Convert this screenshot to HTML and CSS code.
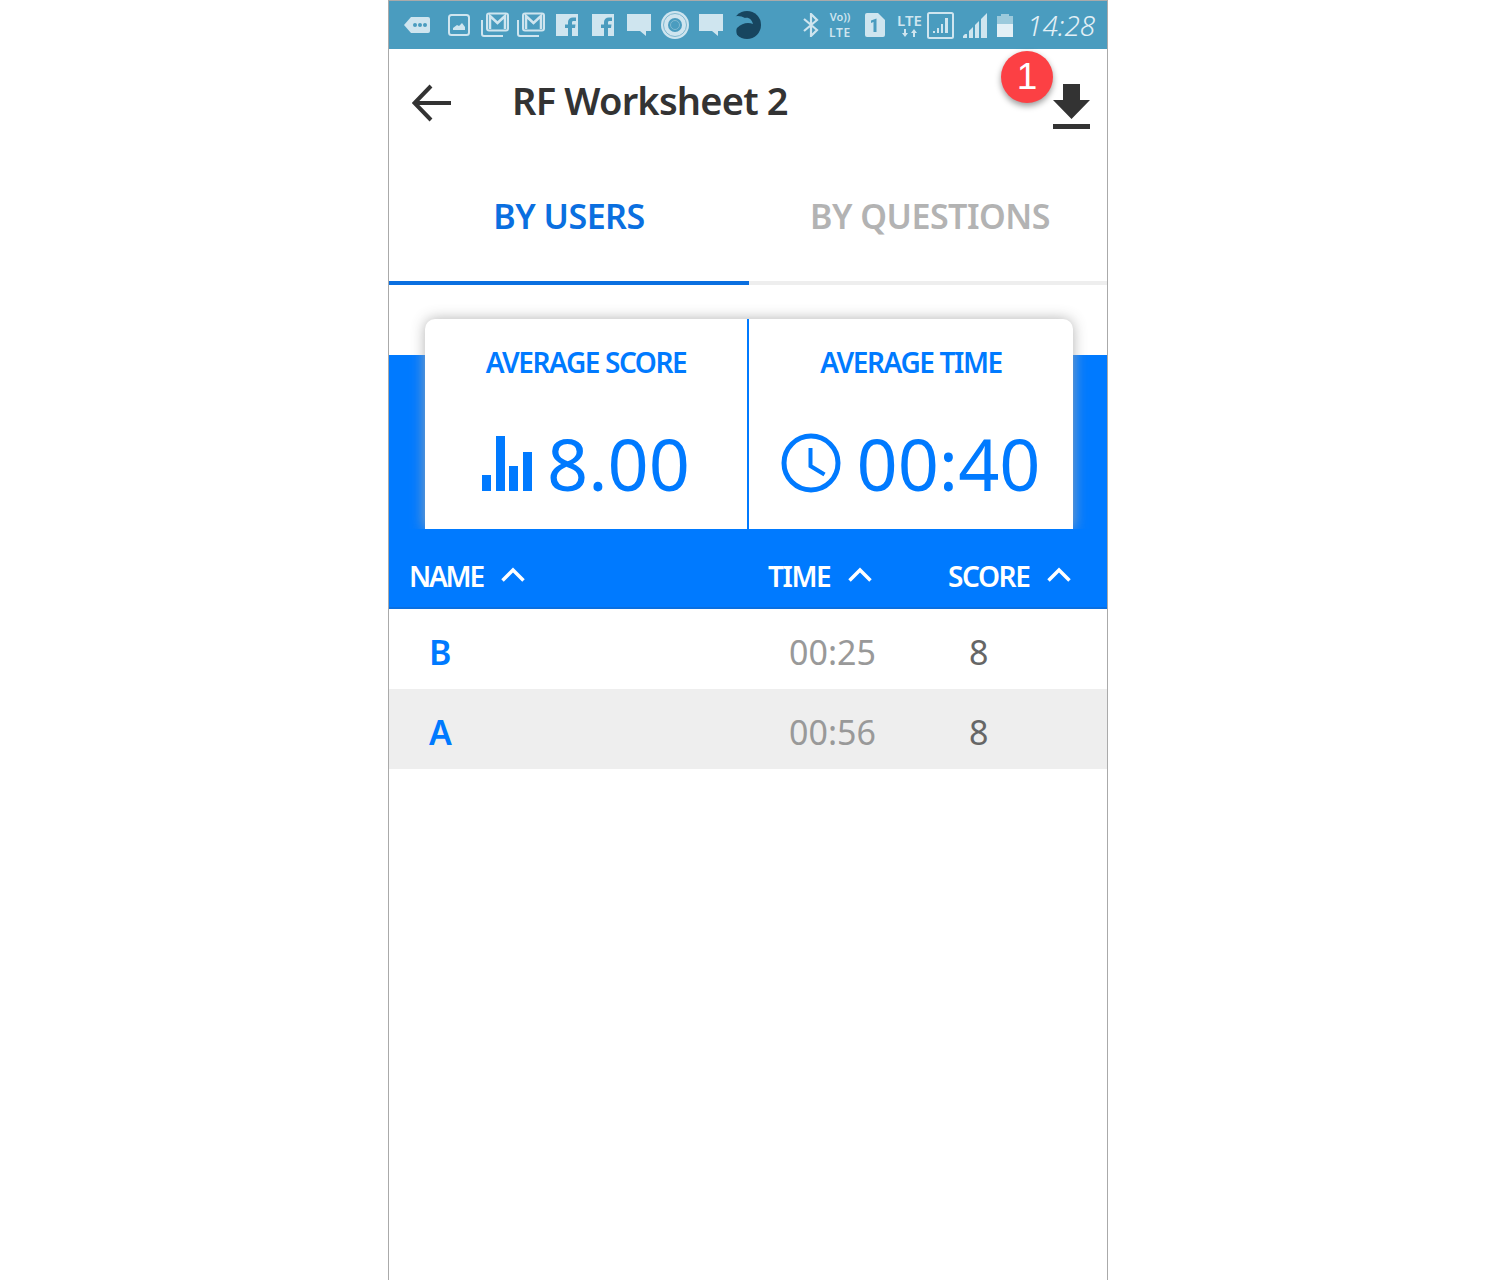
FILE: index.html
```html
<!DOCTYPE html>
<html lang="en">
<head>
    <meta charset="UTF-8">
    <title>RF Worksheet 2</title>
    <link rel="stylesheet" href="styles.css">
</head>
<body>
    <div class="phone">
        <!-- Android status bar -->
        <div class="status-bar">
            <div class="notif-icons">
                <span class="slot slot-first"><svg width="28" height="22" viewBox="0 0 28 22"><path d="M1 11 8 3h17a2 2 0 0 1 2 2v12a2 2 0 0 1-2 2H8z" fill="#cfe5ef"/><circle cx="12" cy="11" r="2" fill="#4a9cbf"/><circle cx="17" cy="11" r="2" fill="#4a9cbf"/><circle cx="22" cy="11" r="2" fill="#4a9cbf"/></svg></span>
                <span class="slot"><svg width="24" height="24" viewBox="0 0 24 24"><rect x="2" y="2" width="20" height="20" rx="2.500" fill="none" stroke="#cfe5ef" stroke-width="2"/><path d="M6 17v-2l4-3 2 1 3-3 3 4v3z" fill="#cfe5ef"/></svg></span>
                <span class="slot"><svg width="30" height="26" viewBox="0 0 30 26"><rect x="7" y="1.500" width="21" height="17" rx="2" fill="none" stroke="#cfe5ef" stroke-width="2"/><path d="M10 17V4l7.500 7L25 4v13" fill="none" stroke="#cfe5ef" stroke-width="2.500"/><path d="M2 8v14a2 2 0 0 0 2 2h19" fill="none" stroke="#cfe5ef" stroke-width="2"/></svg></span>
                <span class="slot"><svg width="30" height="26" viewBox="0 0 30 26"><rect x="7" y="1.500" width="21" height="17" rx="2" fill="none" stroke="#cfe5ef" stroke-width="2"/><path d="M10 17V4l7.500 7L25 4v13" fill="none" stroke="#cfe5ef" stroke-width="2.500"/><path d="M2 8v14a2 2 0 0 0 2 2h19" fill="none" stroke="#cfe5ef" stroke-width="2"/></svg></span>
                <span class="slot"><svg width="22" height="22" viewBox="0 0 22 22"><path d="M0 0h22v22h-6v-8h3l.5-3.500H16V8.500c0-1 .5-1.500 1.500-1.500H20V3.500h-3c-3 0-5 2-5 4.500v2.500H9V14h3v8H0z" fill="#cfe5ef"/></svg></span>
                <span class="slot"><svg width="22" height="22" viewBox="0 0 22 22"><path d="M0 0h22v22h-6v-8h3l.5-3.500H16V8.500c0-1 .5-1.500 1.500-1.500H20V3.500h-3c-3 0-5 2-5 4.500v2.500H9V14h3v8H0z" fill="#cfe5ef"/></svg></span>
                <span class="slot"><svg width="24" height="22" viewBox="0 0 24 22"><path d="M0 0h24v17h-5v5l-6-5H0z" fill="#cfe5ef"/></svg></span>
                <span class="slot"><svg width="28" height="28" viewBox="0 0 28 28"><circle cx="14" cy="14" r="14" fill="#cfe5ef"/><circle cx="14" cy="14" r="11.500" fill="none" stroke="#7fb8d0" stroke-width="1"/><circle cx="14" cy="14" r="7" fill="#4a9cbf"/><circle cx="14" cy="14" r="4.500" fill="none" stroke="#7fb8d0" stroke-width="1"/></svg></span>
                <span class="slot"><svg width="24" height="22" viewBox="0 0 24 22"><path d="M0 0h24v17h-5v5l-6-5H0z" fill="#cfe5ef"/></svg></span>
                <span class="slot"><svg width="28" height="28" viewBox="0 0 28 28"><circle cx="14" cy="14" r="14" fill="#17455f"/><path d="M-1 7C3 4 8 5 12 7c4-1 7 2 8 6-5-2-11-1-16 4-1 2-1 5 1 9-3-2-6-6-6-12z" fill="#4a9cbf"/></svg></span>
            </div>
            <div class="system-icons">
                <svg class="ic-bt" width="18" height="24" viewBox="0 0 18 24"><path d="M2 6l13 11-6 6V1l6 6L2 18" fill="none" stroke="#cfe5ef" stroke-width="2.200"/></svg>
                <span class="net-label ic-volte"><span>Vo))</span><span class="net-bottom">LTE</span></span>
                <svg class="ic-sim" width="20" height="24" viewBox="0 0 20 24"><path d="M2 0h11l7 7v15a2 2 0 0 1-2 2H2a2 2 0 0 1-2-2V2a2 2 0 0 1 2-2z" fill="#cfe5ef"/><path d="M6 7.500l5.500-2V19H8.500V9L6 10z" fill="#4a9cbf"/></svg>
                <span class="net-label ic-lte"><span class="lte-big">LTE</span><svg width="16" height="10" viewBox="0 0 16 10"><path d="M3 9 0 5h2V1h2v4h2zM12 1l3 4h-2v4h-2V5H9z" fill="#cfe5ef"/></svg></span>
                <svg class="ic-box" width="27" height="27" viewBox="0 0 27 27"><rect x="1" y="1" width="25" height="25" rx="1.500" fill="none" stroke="#cfe5ef" stroke-width="2"/><path d="M6 21h2v-2H6zM10 21h2v-5h-2zM14 21h2v-9h-2zM18 21h3V6h-3z" fill="#cfe5ef"/></svg>
                <svg class="ic-signal" width="25" height="25" viewBox="0 0 25 25"><path d="M0 25v-2l2-2h2v4zM6 25v-7l4-4v11zM12 25V12l4-4v17zM18 25V6l6-6v25z" fill="#cfe5ef"/></svg>
                <svg class="ic-battery" width="16" height="23" viewBox="0 0 16 23"><path d="M4 0h8v2h4v8H0V2h4z" fill="#9ccadc"/><path d="M0 10h16v13H0z" fill="#e3f0f6"/></svg>
                <span class="clock">14:28</span>
            </div>
        </div>

        <!-- Title row -->
        <header class="app-bar">
            <svg class="back-icon" width="40" height="38" viewBox="0 0 40 38"><path d="M39 19H3M19 2 2.500 19 19 36" fill="none" stroke="#333" stroke-width="4"/></svg>
            <h1 class="app-title">RF Worksheet 2</h1>
            <div class="download">
                <span class="badge">1</span>
                <svg width="37" height="46" viewBox="0 0 37 46"><path d="M10 0h17v16h10L18.500 35 0 16h10zM0 40h37v5H0z" fill="#333"/></svg>
            </div>
        </header>

        <!-- Tabs -->
        <nav class="tabs">
            <div class="tab tab-active">BY USERS</div>
            <div class="tab tab-other">BY QUESTIONS</div>
        </nav>

        <!-- Averages card -->
        <section class="stats">
            <div class="stats-card">
                <div class="stat stat-score">
                    <div class="stat-label">AVERAGE SCORE</div>
                    <div class="stat-value">
                        <svg width="50" height="55" viewBox="0 0 50 55"><path d="M0 39h9v16H0zM14 0h9v55h-9zM27 30h9v25h-9zM41 16h9v39h-9z" fill="#007aff"/></svg>
                        <span>8.00</span>
                    </div>
                </div>
                <div class="stat stat-time">
                    <div class="stat-label">AVERAGE TIME</div>
                    <div class="stat-value">
                        <svg width="60" height="60" viewBox="0 0 60 60"><circle cx="30" cy="30" r="27" fill="none" stroke="#007aff" stroke-width="5"/><path d="M29.500 15v18l14 8.500" fill="none" stroke="#007aff" stroke-width="4"/></svg>
                        <span>00:40</span>
                    </div>
                </div>
            </div>
        </section>

        <!-- Results table -->
        <div class="table-head">
            <div class="th th-name">NAME <svg width="24" height="15" viewBox="0 0 24 15"><path d="M1.500 13.500 12 3l10.500 10.500" fill="none" stroke="#fff" stroke-width="3.500"/></svg></div>
            <div class="th">TIME <svg width="24" height="15" viewBox="0 0 24 15"><path d="M1.500 13.500 12 3l10.500 10.500" fill="none" stroke="#fff" stroke-width="3.500"/></svg></div>
            <div class="th">SCORE <svg width="24" height="15" viewBox="0 0 24 15"><path d="M1.500 13.500 12 3l10.500 10.500" fill="none" stroke="#fff" stroke-width="3.500"/></svg></div>
        </div>
        <div class="row">
            <div class="cell-name">B</div>
            <div class="cell-time">00:25</div>
            <div class="cell-score">8</div>
        </div>
        <div class="row row-alt">
            <div class="cell-name">A</div>
            <div class="cell-time">00:56</div>
            <div class="cell-score">8</div>
        </div>
    </div>
</body>
</html>
```

FILE: styles.css
```css
/* General */
body {
    margin: 0;
    background: #fff;
    font-family: "Noto Sans", sans-serif;
    color: #333;
}

.phone {
    box-sizing: border-box;
    width: 720px;
    height: 1280px;
    margin-left: 388px;
    border-left: 1px solid #aaa;
    border-right: 1px solid #aaa;
    border-top: 1px solid #aaa;
    overflow: hidden;
}

/* Status bar */
.status-bar {
    height: 48px;
    background: #4a9cbf;
    display: flex;
    align-items: center;
    justify-content: space-between;
    color: #cfe5ef;
}

.notif-icons {
    display: flex;
    align-items: center;
    padding-left: 10px;
}

.slot {
    width: 36px;
    height: 30px;
    display: flex;
    align-items: center;
    justify-content: center;
}

.slot-first {
    margin-right: 6px;
}

.system-icons {
    display: flex;
    align-items: center;
    padding-right: 10px;
}

.ic-volte { margin-right: 13px; width: 24px; }
.ic-bt { margin-right: 8px; }
.ic-sim { margin-right: 12px; }
.ic-lte { margin-right: 5px; width: 25px; }
.ic-box { margin-right: 9px; }
.ic-signal { margin-right: 9px; }
.ic-battery { margin-right: 14px; }

.net-label {
    display: flex;
    flex-direction: column;
    align-items: center;
    font-size: 11px;
    line-height: 16px;
    font-weight: 600;
}

.net-bottom {
    font-size: 12px;
    letter-spacing: 0.8px;
}

.lte-big {
    font-size: 15px;
    line-height: 15px;
}

.clock {
    width: 70px;
    font-size: 28px;
    line-height: 30px;
    font-style: italic;
    font-weight: 300;
    white-space: nowrap;
    color: #e3f0f6;
}

/* Title row */
.app-bar {
    height: 101px;
    display: flex;
    align-items: center;
    position: relative;
}

.back-icon {
    margin-left: 23px;
    margin-top: 6px;
}

.app-title {
    margin: 0 0 0 60px;
    font-size: 38px;
    line-height: 50px;
    font-weight: 600;
    letter-spacing: -0.800px;
    color: #333;
}

.download {
    margin-left: auto;
    margin-right: 17px;
    margin-top: 14px;
}

.download svg {
    display: block;
}

.badge {
    position: absolute;
    left: 612px;
    top: 2px;
    width: 52px;
    height: 52px;
    border-radius: 50%;
    background: #fc4044;
    box-shadow: 0 3px 6px rgba(0, 0, 0, 0.4);
    color: #fff;
    font-family: "Liberation Sans", sans-serif;
    font-size: 37px;
    line-height: 52px;
    text-align: center;
}

/* Tabs */
.tabs {
    display: flex;
    height: 135px;
}

.tab {
    flex: 1;
    box-sizing: border-box;
    padding-top: 40px;
    text-align: center;
    font-size: 34px;
    line-height: 52px;
    font-weight: 600;
    letter-spacing: -0.500px;
    color: #b3b3b3;
    border-bottom: 4px solid #eee;
}

.tab-other {
    padding-left: 4px;
}

.tab-active {
    flex: none;
    width: 360px;
    color: #0a6fe0;
    border-bottom-color: #0a6fe0;
}

/* Averages */
.stats {
    height: 244px;
    padding-top: 34px;
    box-sizing: border-box;
    background: linear-gradient(#fff 70px, #007aff 70px);
}

.stats-card {
    display: flex;
    width: 648px;
    height: 210px;
    margin-left: 36px;
    background: #fff;
    border-radius: 10px 10px 0 0;
    box-shadow: 0 0 14px rgba(170, 170, 170, 0.9);
    color: #007aff;
}

.stat {
    text-align: center;
}

.stat-score {
    width: 322px;
    border-right: 2px solid #007aff;
}

.stat-time {
    flex: 1;
}

.stat-label {
    margin-top: 23px;
    font-size: 28px;
    line-height: 40px;
    font-weight: 600;
    letter-spacing: -1.400px;
}

.stat-value {
    display: flex;
    align-items: center;
    justify-content: center;
    gap: 15px;
    margin-top: 39px;
    font-size: 72px;
    line-height: 84px;
    font-weight: 400;
}

/* Table */
.table-head {
    position: relative;
    display: grid;
    grid-template-columns: 359px 180px 1fr;
    align-items: center;
    box-sizing: border-box;
    height: 80px;
    padding: 16px 0 0 20px;
    background: #007aff;
    border-bottom: 2px solid #0a6fe0;
}

.th {
    display: flex;
    align-items: center;
    gap: 18px;
    font-size: 28px;
    line-height: 40px;
    font-weight: 600;
    letter-spacing: -1.400px;
    color: #fff;
}

.th svg {
    margin-top: -3px;
}

.th-name {
    letter-spacing: -2.200px;
}

.row {
    display: grid;
    grid-template-columns: 360px 180px 1fr;
    align-items: center;
    box-sizing: border-box;
    height: 80px;
    padding: 6px 0 0 40px;
    font-size: 34px;
}

.row-alt {
    background: #eee;
}

.cell-name {
    font-size: 34px;
    font-weight: 600;
    color: #007aff;
}

.cell-time {
    color: #999;
}

.cell-score {
    color: #666;
}
```
